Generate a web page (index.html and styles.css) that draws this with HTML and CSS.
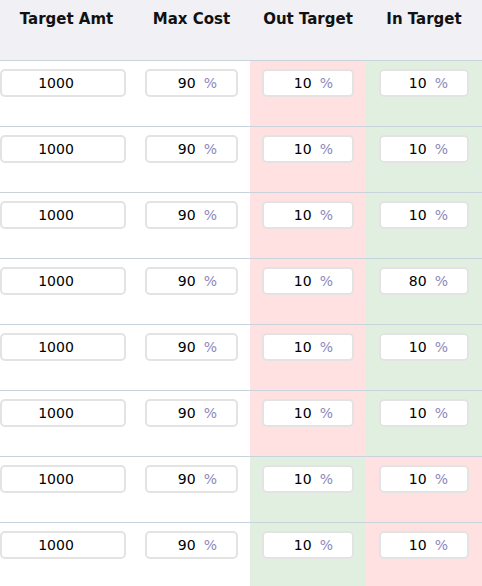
FILE: index.html
```html
<!DOCTYPE html>
<html lang="en">
  <head>
    <meta charset="UTF-8" />
    <meta name="viewport" content="width=device-width, initial-scale=1.0" />
    <title>Targets</title>
    <link rel="stylesheet" href="styles.css">
  </head>
  <body>
    <table class="targets">
      <colgroup>
        <col class="col-amt" />
        <col class="col-cost" />
        <col class="col-out" />
        <col class="col-in" />
      </colgroup>
      <thead>
        <tr>
          <th>Target Amt</th>
          <th>Max Cost</th>
          <th>Out Target</th>
          <th>In Target</th>
        </tr>
      </thead>
      <tbody>
        <tr>
          <td class="amt"><input class="field plain" type="text" value="1000" /></td>
          <td><label class="field"><input type="text" value="90" /><span class="unit">%</span></label></td>
          <td class="bad"><label class="field"><input type="text" value="10" /><span class="unit">%</span></label></td>
          <td class="good last"><label class="field"><input type="text" value="10" /><span class="unit">%</span></label></td>
        </tr>
        <tr>
          <td class="amt"><input class="field plain" type="text" value="1000" /></td>
          <td><label class="field"><input type="text" value="90" /><span class="unit">%</span></label></td>
          <td class="bad"><label class="field"><input type="text" value="10" /><span class="unit">%</span></label></td>
          <td class="good last"><label class="field"><input type="text" value="10" /><span class="unit">%</span></label></td>
        </tr>
        <tr>
          <td class="amt"><input class="field plain" type="text" value="1000" /></td>
          <td><label class="field"><input type="text" value="90" /><span class="unit">%</span></label></td>
          <td class="bad"><label class="field"><input type="text" value="10" /><span class="unit">%</span></label></td>
          <td class="good last"><label class="field"><input type="text" value="10" /><span class="unit">%</span></label></td>
        </tr>
        <tr>
          <td class="amt"><input class="field plain" type="text" value="1000" /></td>
          <td><label class="field"><input type="text" value="90" /><span class="unit">%</span></label></td>
          <td class="bad"><label class="field"><input type="text" value="10" /><span class="unit">%</span></label></td>
          <td class="good last"><label class="field"><input type="text" value="80" /><span class="unit">%</span></label></td>
        </tr>
        <tr>
          <td class="amt"><input class="field plain" type="text" value="1000" /></td>
          <td><label class="field"><input type="text" value="90" /><span class="unit">%</span></label></td>
          <td class="bad"><label class="field"><input type="text" value="10" /><span class="unit">%</span></label></td>
          <td class="good last"><label class="field"><input type="text" value="10" /><span class="unit">%</span></label></td>
        </tr>
        <tr>
          <td class="amt"><input class="field plain" type="text" value="1000" /></td>
          <td><label class="field"><input type="text" value="90" /><span class="unit">%</span></label></td>
          <td class="bad"><label class="field"><input type="text" value="10" /><span class="unit">%</span></label></td>
          <td class="good last"><label class="field"><input type="text" value="10" /><span class="unit">%</span></label></td>
        </tr>
        <tr>
          <td class="amt"><input class="field plain" type="text" value="1000" /></td>
          <td><label class="field"><input type="text" value="90" /><span class="unit">%</span></label></td>
          <td class="good"><label class="field"><input type="text" value="10" /><span class="unit">%</span></label></td>
          <td class="bad last"><label class="field"><input type="text" value="10" /><span class="unit">%</span></label></td>
        </tr>
        <tr>
          <td class="amt"><input class="field plain" type="text" value="1000" /></td>
          <td><label class="field"><input type="text" value="90" /><span class="unit">%</span></label></td>
          <td class="good"><label class="field"><input type="text" value="10" /><span class="unit">%</span></label></td>
          <td class="bad last"><label class="field"><input type="text" value="10" /><span class="unit">%</span></label></td>
        </tr>
      </tbody>
    </table>
  </body>
</html>
```

FILE: styles.css
```css
body {
  margin: 0;
  font-family: "DejaVu Sans", Verdana, sans-serif;
  font-size: 14px;
  color: #000;
  background: #fff;
  overflow: hidden;
}

.targets {
  width: 482px;
  border-collapse: collapse;
  table-layout: fixed;
}

.col-amt {
  width: 133px;
}

.col-cost {
  width: 117px;
}

.col-out,
.col-in {
  width: 116px;
}

th {
  height: 60px;
  padding: 10px 0 0;
  box-sizing: border-box;
  vertical-align: top;
  background: #f0f0f5;
  font-size: 15px;
  font-weight: bold;
  text-align: center;
  color: #111;
  border-bottom: 1px solid #c9d3db;
}

td {
  height: 66px;
  padding: 8px 12px 0;
  box-sizing: border-box;
  vertical-align: top;
  border-bottom: 1px solid #c9d3db;
}

td.amt {
  padding: 8px 7px 0 0;
}

td.last {
  padding: 8px 13px 0;
}

td.bad {
  background: #ffe1e1;
}

td.good {
  background: #e1efe1;
}

.field {
  display: flex;
  align-items: center;
  width: 100%;
  height: 28px;
  box-sizing: border-box;
  padding: 0 19px 0 4px;
  border: 2px solid #e3e3e3;
  border-radius: 5px;
  background: #fff;
}

.field input {
  flex: 1;
  min-width: 0;
  padding: 0;
  border: none;
  outline: none;
  background: transparent;
  font: inherit;
  color: #000;
  text-align: right;
}

input.plain {
  padding: 0 14px 0 0;
  font: inherit;
  color: #000;
  text-align: center;
  outline: none;
}

.unit {
  margin-left: 8px;
  color: #8d88bb;
}
```
